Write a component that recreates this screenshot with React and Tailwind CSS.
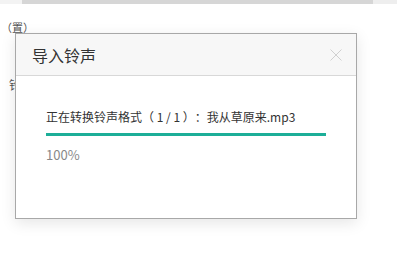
import React from "react";

export default function App() {
  const font = { fontFamily: '"Noto Sans CJK SC", "Noto Sans", sans-serif' };
  return (
    <div className="relative w-[397px] h-[253px] bg-white overflow-hidden [text-spacing-trim:space-all]" style={font}>
      {/* background page */}
      <div className="flex h-[4px]">
        <div className="w-[22px] bg-[#f3f3f3]" />
        <div className="w-[351px] bg-[#d6d6d6]" />
        <div className="flex-1 bg-[#eeeeee]" />
      </div>
      <div className="ml-[1px] mt-[17px] text-[11px] leading-[13px] text-[#555] whitespace-nowrap">（置）</div>
      <div className="pl-[9px] pt-[44px] text-[12px] leading-[14px] text-[#555]">铃</div>

      {/* dialog */}
      <div className="absolute left-[15px] top-[33px] w-[342px] h-[186px] border border-[#a8a8a8] bg-white flex flex-col shadow-[0_4px_14px_rgba(0,0,0,0.10)]">
        <div className="h-[42px] bg-[#f7f7f7] border-b border-[#d8d8d8] flex items-center justify-between pl-[16px] pr-[14px]">
          <span className="text-[16px] text-[#333] leading-none">导入铃声</span>
          <svg width="12" height="12" viewBox="0 0 12 12">
            <path d="M0.5 0.5 L11.5 11.5 M11.5 0.5 L0.5 11.5" stroke="#d0d0d0" strokeWidth="1" />
          </svg>
        </div>
        <div className="pl-[30px] pr-[30px] pt-[33px]">
          <div className="text-[12px] leading-[16px] text-[#333] whitespace-nowrap">正在转换铃声格式（ 1 / 1 ）：我从草原来.mp3</div>
          <div className="mt-[8px] h-[3px] w-[280px] bg-[#1cae98]" />
          <div className="mt-[11px] text-[13px] leading-[16px] text-[#888]">100%</div>
        </div>
      </div>
    </div>
  );
}
